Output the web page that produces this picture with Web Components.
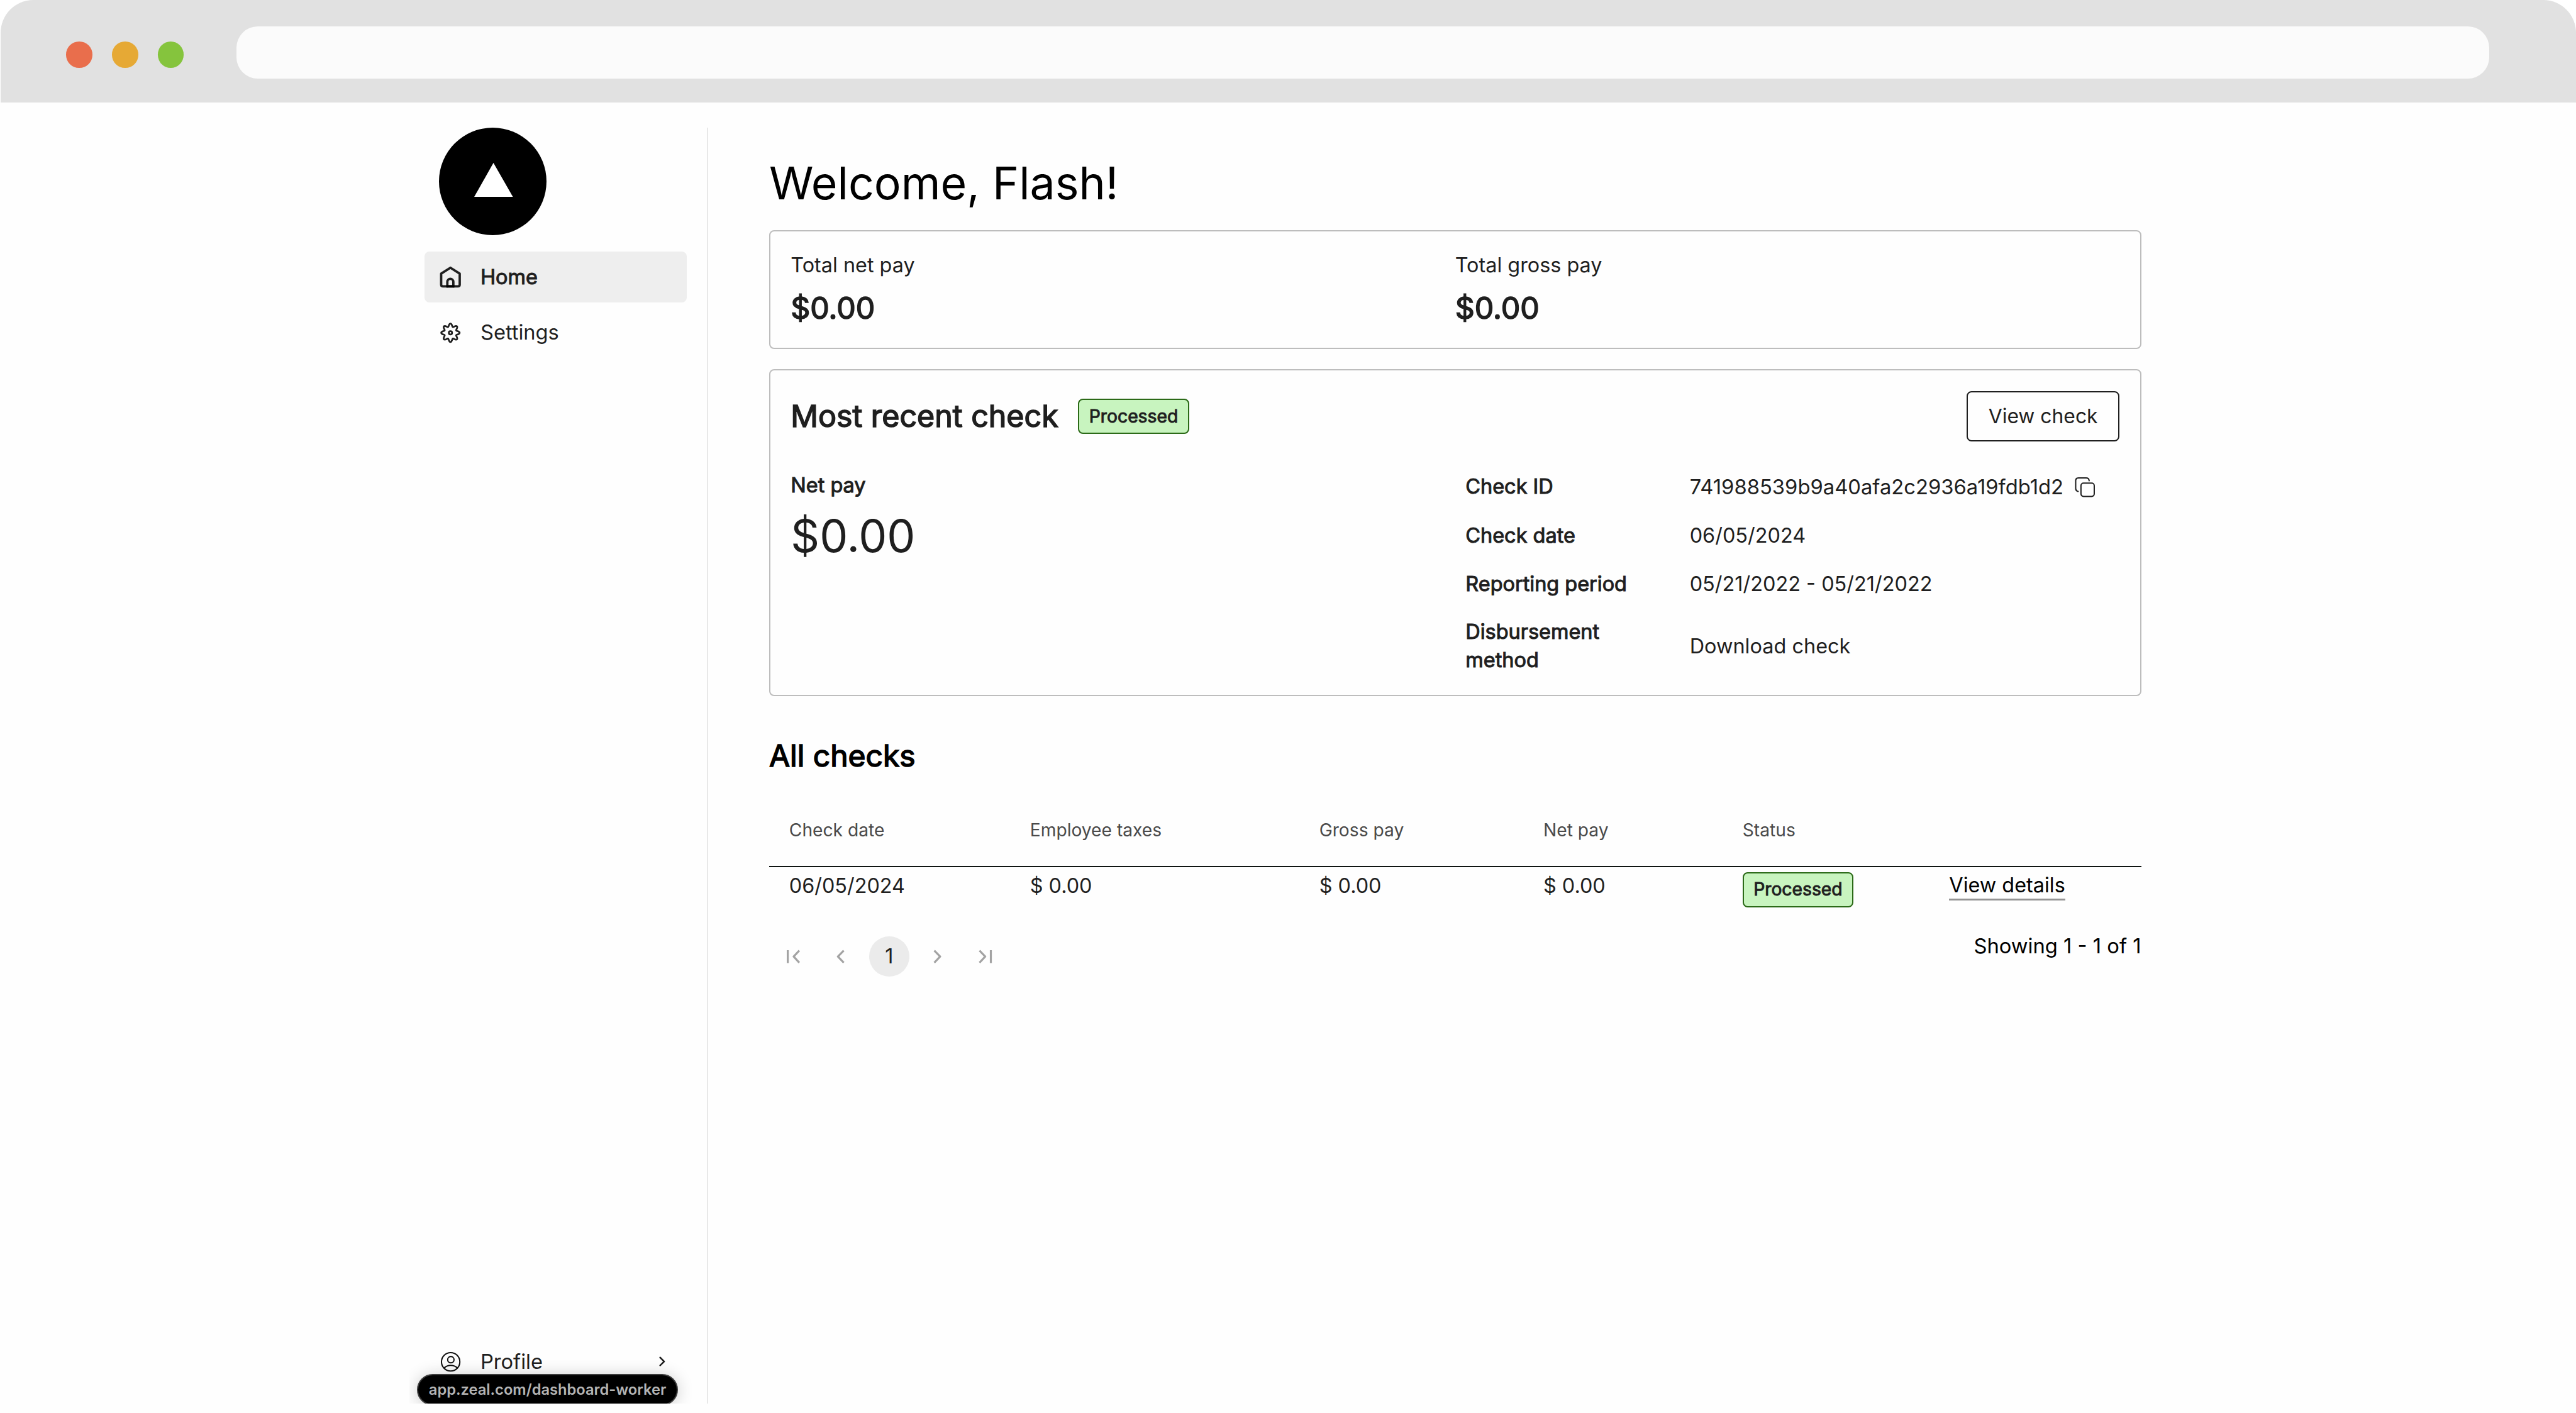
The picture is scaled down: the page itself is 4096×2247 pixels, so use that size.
<!DOCTYPE html>
<html lang="en">
<head>
<meta charset="utf-8">
<title>Dashboard</title>
<style>
    /* 1rem = 1/47.2 of the window width, every size is in rem */
    html {
        font-size: calc(100vw / 47.2);
    }

    body {
        margin: 0;
        height: 100vh;
        overflow: hidden;
        background: #fff;
        font-family: Inter, "Liberation Sans", sans-serif;
        color: #1f1f1f;
    }
</style>
</head>
<body>
<browser-window>
    <worker-app></worker-app>
</browser-window>

<script>
// attach an open shadow root filled with the given markup
function render(el, html) {
    const template = document.createElement("template")
    template.innerHTML = html
    const shadow = el.attachShadow({ mode: "open" })
    shadow.appendChild(template.content.cloneNode(true))
    return shadow
}

// wavy outline with eight teeth
function gearPath(cx, cy) {
    let d = ""
    for (let i = 0; i < 128; i++) {
        const a = i / 128 * Math.PI * 2
        const r = 42.5 + 8.2 * Math.cos(a * 8)
        d += (i ? "L" : "M") + (cx + r * Math.sin(a)).toFixed(2) + " " + (cy - r * Math.cos(a)).toFixed(2)
    }
    return d + "Z"
}

const ICONS = {
    home: ["41 34.5 126 126", `
        <g stroke-width="13">
            <path d="M104 47.5L155 80V140Q155 150 145 150H63Q53 150 53 140V80Z"/>
            <path d="M87 150V125a16.5 16.5 0 0 1 33 0V150"/>
            <path stroke="#000" stroke-linecap="butt" d="M81 150H126"/>
        </g>`],
    settings: ["41 337 126 126", `
        <g stroke-width="9.5">
            <path d="${gearPath(104, 403.5)}"/>
            <circle cx="104" cy="403.5" r="9"/>
        </g>`],
    profile: ["191.7 40 126 126", `
        <g stroke-width="7" stroke="#111">
            <circle cx="256" cy="108" r="50.5"/>
            <circle cx="257" cy="96" r="17.5"/>
            <path d="M220 142Q234 127 256.500 127T293 142"/>
        </g>`],
    copy: ["174.5 63 126 126", `
        <g stroke-width="7">
            <rect x="215.500" y="105.500" width="73" height="73" rx="14"/>
            <path d="M260.500 92Q259 76.500 244 76.500H202Q186.500 76.500 186.500 92V135Q186.500 149 200 151"/>
        </g>`],
    chevron: ["0 0 42 42", `<path stroke-width="2.9" d="M16.900 14.700L24.300 22L16.900 29.200"/>`],
    first: ["0 0 74 74", `<path stroke-width="3.7" stroke-linecap="butt" d="M27.200 25.300V48.900M48.300 26L38 37.100L48.300 48.200"/>`],
    prev: ["0 0 74 74", `<path stroke-width="3.7" stroke-linecap="butt" d="M42.200 26L31.500 37.100L42.200 48.200"/>`],
    next: ["0 0 74 74", `<path stroke-width="3.7" stroke-linecap="butt" d="M31.800 26L42.500 37.100L31.800 48.200"/>`],
    last: ["0 0 74 74", `<path stroke-width="3.7" stroke-linecap="butt" d="M25.900 26L36.400 37.100L25.900 48.200M46.700 25.300V48.900"/>`]
}

class UiIcon extends HTMLElement {
    constructor() {
        super()
        const [box, shapes] = ICONS[this.getAttribute("name")]
        render(this, `
        <style>
        :host {
            display: block;
            flex: none;
            width: .42rem;
            height: .42rem;
        }

        svg {
            display: block;
            width: 100%;
            height: 100%;
            overflow: visible;
        }
        </style>
        <svg viewBox="${box}" fill="none" stroke="currentColor" stroke-linecap="round" stroke-linejoin="round">${shapes}</svg>
        `)
    }
}

class BrowserWindow extends HTMLElement {
    constructor() {
        super()
        render(this, `
        <style>
        :host {
            display: flex;
            flex-direction: column;
            height: 100vh;
        }

        header {
            flex: none;
            box-sizing: border-box;
            height: 1.88rem;
            padding: 0 1.59rem 0 1.2rem;
            margin-left: .01rem;
            border-radius: .6rem .6rem 0 0;
            background: #e1e1e1;
            display: flex;
            align-items: flex-start;
        }

        i {
            width: .48rem;
            height: .48rem;
            margin: .76rem .36rem 0 0;
            border-radius: 50%;
        }

        .address {
            flex: 1;
            height: .96rem;
            margin: .48rem 0 0 .6rem;
            border-radius: .39rem;
            background: #fbfbfb;
        }

        main {
            flex: 1;
            min-height: 0;
            background: #fefefe;
        }
        </style>
        <header>
            <i style="background: #e96e4c"></i>
            <i style="background: #e6a935"></i>
            <i style="background: #85c43d"></i>
            <div class="address"></div>
        </header>
        <main><slot></slot></main>
        `)
    }
}

class NavItem extends HTMLElement {
    constructor() {
        super()
        render(this, `
        <style>
        :host {
            display: flex;
            align-items: center;
            box-sizing: border-box;
            height: .924rem;
            padding: 0 .241rem 0 .256rem;
            border-radius: .09rem;
            font-size: .376rem;
        }

        :host([active]) {
            background: #eee;
            font-size: .374rem;
            -webkit-text-stroke: .012rem;
        }

        span {
            flex: 1;
            margin-left: .345rem;
        }
        </style>
        <ui-icon name="${this.getAttribute("icon")}"></ui-icon>
        <span><slot></slot></span>
        ${this.hasAttribute("more") ? `<ui-icon name="chevron"></ui-icon>` : ""}
        `)
    }
}

class SideBar extends HTMLElement {
    constructor() {
        super()
        render(this, `
        <style>
        :host {
            display: flex;
            flex-direction: column;
            flex: none;
            box-sizing: border-box;
            width: 5.193rem;
            padding: 0 .37rem .314rem 0;
            margin-left: .287rem;
            border-right: .0235rem solid #e8e8e8;
        }

        .logo {
            display: block;
            width: 1.97rem;
            height: 1.97rem;
            margin: 0 0 .304rem .256rem;
        }

        nav {
            display: flex;
            flex-direction: column;
            gap: .086rem;
            flex: 1;
        }
        </style>
        <svg class="logo" viewBox="0 0 197 197">
            <circle cx="98.500" cy="98.500" r="98.500"/>
            <path fill="#fff" d="M99.800 64.500L135.400 126.700H64.600Z"/>
        </svg>
        <nav>
            <nav-item icon="home" active>Home</nav-item>
            <nav-item icon="settings">Settings</nav-item>
        </nav>
        <nav-item icon="profile" more>Profile</nav-item>
        `)
    }
}

// url hint the browser shows over the page
class StatusHint extends HTMLElement {
    constructor() {
        super()
        render(this, `
        <style>
        :host {
            position: absolute;
            left: .149rem;
            bottom: -.03rem;
            box-sizing: border-box;
            width: 4.775rem;
            height: .567rem;
            border: .0235rem solid #3c3c3c;
            border-radius: .29rem;
            background: #000;
            color: #b4b4b4;
            box-shadow: 0 .02rem .3rem rgba(0, 0, 0, .2);
            font-size: .273rem;
            font-weight: 600;
            line-height: .53rem;
            text-align: center;
            white-space: nowrap;
        }
        </style>
        <slot></slot>
        `)
    }
}

class UiCard extends HTMLElement {
    constructor() {
        super()
        render(this, `
        <style>
        :host {
            display: block;
            box-sizing: border-box;
            padding: .373rem;
            border: .0235rem solid #bdbdbd;
            border-radius: .09rem;
        }
        </style>
        <slot></slot>
        `)
    }
}

class StatusBadge extends HTMLElement {
    constructor() {
        super()
        render(this, `
        <style>
        :host {
            display: inline-flex;
            align-items: center;
            box-sizing: border-box;
            height: .64rem;
            padding: 0 .178rem;
            border: .024rem solid #2b6a17;
            border-radius: .09rem;
            background: #c8f4bf;
            font-size: .326rem;
            -webkit-text-stroke: .011rem;
        }
        </style>
        <slot></slot>
        `)
    }
}

class PayTotal extends HTMLElement {
    constructor() {
        super()
        render(this, `
        <style>
        :host {
            display: flex;
            flex-direction: column;
            gap: .15rem;
        }

        .label {
            font-size: .373rem;
            line-height: .56rem;
        }

        .amount {
            font-size: .557rem;
            line-height: .7rem;
            -webkit-text-stroke: .018rem;
        }
        </style>
        <span class="label">${this.getAttribute("label")}</span>
        <span class="amount"><slot></slot></span>
        `)
    }
}

class RecentCheck extends HTMLElement {
    constructor() {
        super()
        render(this, `
        <style>
        :host {
            display: block;
        }

        header {
            display: flex;
            align-items: center;
            height: .923rem;
        }

        h2 {
            margin: 0 .365rem 0 0;
            font-size: .557rem;
            font-weight: 400;
            -webkit-text-stroke: .018rem;
        }

        button {
            box-sizing: border-box;
            width: 2.8rem;
            height: .923rem;
            padding: 0;
            margin-left: auto;
            border: .024rem solid #1f1f1f;
            border-radius: .09rem;
            background: none;
            color: inherit;
            font: inherit;
            font-size: .367rem;
        }

        .body {
            display: flex;
        }

        .net {
            width: 12.365rem;
            padding-top: .535rem;
        }

        .net b {
            display: block;
            margin-bottom: .141rem;
            font-size: .374rem;
            line-height: .56rem;
        }

        .net span {
            display: block;
            font-size: .824rem;
            line-height: 1rem;
        }

        b {
            font-weight: 400;
            -webkit-text-stroke: .012rem;
        }

        dl {
            flex: 1;
            display: grid;
            grid-template-columns: 4.106rem 1fr;
            grid-template-rows: .55rem auto;
            row-gap: .37rem;
            align-items: center;
            margin: .555rem 0 0;
            font-size: .374rem;
            line-height: .515rem;
        }

        dt {
            padding-right: 1rem;
            -webkit-text-stroke: .012rem;
        }

        dd {
            display: flex;
            align-items: center;
            margin: 0;
        }

        .id {
            font-size: .3775rem;
        }

        ui-icon {
            margin-left: .18rem;
        }
        </style>
        <header>
            <h2>Most recent check</h2>
            <status-badge>Processed</status-badge>
            <button>View check</button>
        </header>
        <div class="body">
            <div class="net">
                <b>Net pay</b>
                <span>$0.00</span>
            </div>
            <dl>
                <dt>Check ID</dt>
                <dd class="id">741988539b9a40afa2c2936a19fdb1d2<ui-icon name="copy"></ui-icon></dd>
                <dt>Check date</dt>
                <dd>06/05/2024</dd>
                <dt>Reporting period</dt>
                <dd>05/21/2022 - 05/21/2022</dd>
                <dt>Disbursement method</dt>
                <dd>Download check</dd>
            </dl>
        </div>
        `)
    }
}

class ChecksTable extends HTMLElement {
    constructor() {
        super()
        render(this, `
        <style>
        :host {
            display: block;
        }

        .row {
            display: grid;
            grid-template-columns: 4.413rem 5.3rem 4.106rem 3.65rem 3.787rem 1fr;
            justify-items: start;
            align-items: start;
            padding-left: .367rem;
            font-size: .373rem;
            line-height: .52rem;
        }

        .head {
            padding-bottom: .392rem;
            border-bottom: .027rem solid #101513;
            color: #4a4a4a;
            font-size: .325rem;
        }

        .row:not(.head) > span {
            margin-top: .078rem;
        }

        status-badge {
            margin-top: .09rem;
        }

        a {
            margin-top: .103rem;
            border-bottom: .035rem solid #949494;
            color: #000;
            line-height: .466rem;
        }
        </style>
        <div class="row head">
            <span>Check date</span>
            <span>Employee taxes</span>
            <span>Gross pay</span>
            <span>Net pay</span>
            <span>Status</span>
        </div>
        <div class="row">
            <span>06/05/2024</span>
            <span>$ 0.00</span>
            <span>$ 0.00</span>
            <span>$ 0.00</span>
            <status-badge>Processed</status-badge>
            <a>View details</a>
        </div>
        `)
    }
}

class TablePager extends HTMLElement {
    constructor() {
        super()
        render(this, `
        <style>
        :host {
            display: flex;
            justify-content: space-between;
            align-items: flex-start;
            font-size: .374rem;
            line-height: .52rem;
        }

        .pages {
            display: flex;
            gap: .142rem;
            margin: .085rem 0 0 .067rem;
            color: #a3a3a3;
        }

        ui-icon, .current {
            width: .74rem;
            height: .74rem;
        }

        .current {
            border-radius: 50%;
            background: #ebebeb;
            color: #1f1f1f;
            line-height: .74rem;
            text-align: center;
        }

        .count {
            color: #000;
            font-size: .377rem;
        }
        </style>
        <div class="pages">
            <ui-icon name="first"></ui-icon>
            <ui-icon name="prev"></ui-icon>
            <span class="current">1</span>
            <ui-icon name="next"></ui-icon>
            <ui-icon name="last"></ui-icon>
        </div>
        <span class="count">Showing 1 - 1 of 1</span>
        `)
    }
}

class WorkerApp extends HTMLElement {
    constructor() {
        super()
        render(this, `
        <style>
        :host {
            position: relative;
            display: flex;
            box-sizing: border-box;
            height: 23.84rem;
            margin-left: 7.496rem;
            padding-top: .46rem;
            overflow: hidden;
        }

        main {
            width: 25.139rem;
            margin-left: 1.117rem;
        }

        h1 {
            margin: .52rem 0 .36rem;
            color: #000;
            font-size: .825rem;
            font-weight: 400;
            line-height: 1rem;
        }

        .totals {
            display: grid;
            grid-template-columns: 1fr 1fr;
            height: 2.173rem;
            padding-top: .345rem;
            margin-bottom: .377rem;
        }

        h2 {
            margin: .745rem 0 .755rem;
            color: #000;
            font-size: .553rem;
            font-weight: 400;
            line-height: .7rem;
            -webkit-text-stroke: .018rem;
        }

        table-pager {
            margin-top: .45rem;
        }
        </style>
        <side-bar></side-bar>
        <main>
            <h1>Welcome, Flash!</h1>
            <ui-card class="totals">
                <pay-total label="Total net pay">$0.00</pay-total>
                <pay-total label="Total gross pay">$0.00</pay-total>
            </ui-card>
            <ui-card>
                <recent-check></recent-check>
            </ui-card>
            <h2>All checks</h2>
            <checks-table></checks-table>
            <table-pager></table-pager>
        </main>
        <status-hint>app.zeal.com/dashboard-worker</status-hint>
        `)
    }
}

customElements.define("ui-icon", UiIcon)
customElements.define("ui-card", UiCard)
customElements.define("nav-item", NavItem)
customElements.define("side-bar", SideBar)
customElements.define("status-hint", StatusHint)
customElements.define("status-badge", StatusBadge)
customElements.define("pay-total", PayTotal)
customElements.define("recent-check", RecentCheck)
customElements.define("checks-table", ChecksTable)
customElements.define("table-pager", TablePager)
customElements.define("worker-app", WorkerApp)
customElements.define("browser-window", BrowserWindow)
</script>
</body>
</html>
